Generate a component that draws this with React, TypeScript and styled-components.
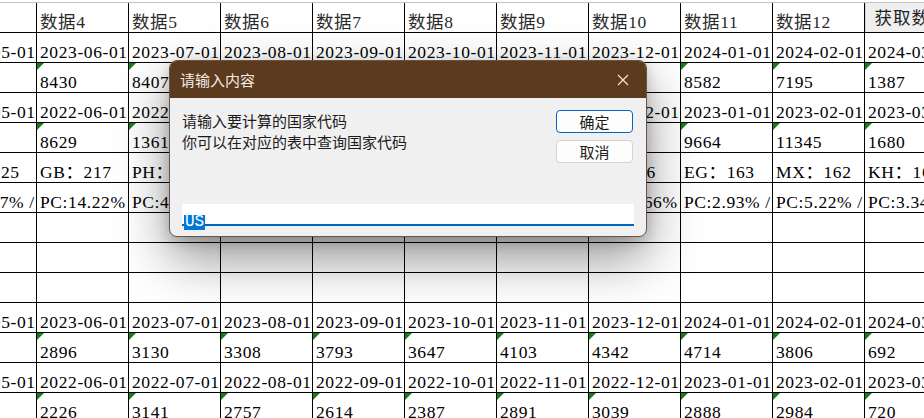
import styled, { createGlobalStyle, css } from 'styled-components';

type RowKind = 'head' | 'date' | 'num' | 'text' | 'empty';

interface SheetRow {
  kind: RowKind;
  cells: string[];
}

const months = (startYear: number, startMonth: number) =>
  Array.from({ length: 11 }, (_, i) => {
    const m = startMonth + i - 1;
    const y = startYear + Math.floor(m / 12);
    const mm = String((m % 12) + 1).padStart(2, '0');
    return `${y}-${mm}-01`;
  });

const empty = Array.from({ length: 11 }, () => '');

const rows: SheetRow[] = [
  {
    kind: 'head',
    cells: ['数据3', '数据4', '数据5', '数据6', '数据7', '数据8', '数据9', '数据10', '数据11', '数据12', '获取数据'],
  },
  { kind: 'date', cells: months(2023, 5) },
  {
    kind: 'num',
    cells: ['8211', '8430', '8407', '8135', '8322', '8590', '8741', '8466', '8582', '7195', '1387'],
  },
  { kind: 'date', cells: months(2022, 5) },
  {
    kind: 'num',
    cells: ['8012', '8629', '1361', '9120', '9388', '9547', '9702', '9815', '9664', '11345', '1680'],
  },
  {
    kind: 'text',
    cells: ['CA：225', 'GB：217', 'PH：209', 'IN：198', 'DE：185', 'TH：179', 'BR：172', 'JP：166', 'EG：163', 'MX：162', 'KH：161'],
  },
  {
    kind: 'text',
    cells: [
      'PC:9.37% / M:90.63%',
      'PC:14.22% / M:85.78%',
      'PC:4.81% / M:95.19%',
      'PC:6.12% / M:93.88%',
      'PC:8.05% / M:91.95%',
      'PC:3.91% / M:96.09%',
      'PC:7.44% / M:92.56%',
      'PC:10.66% / M:89.34%',
      'PC:2.93% / M:97.07%',
      'PC:5.22% / M:94.78%',
      'PC:3.34% / M:96.66%',
    ],
  },
  { kind: 'empty', cells: empty },
  { kind: 'empty', cells: empty },
  { kind: 'empty', cells: empty },
  { kind: 'date', cells: months(2023, 5) },
  {
    kind: 'num',
    cells: ['2714', '2896', '3130', '3308', '3793', '3647', '4103', '4342', '4714', '3806', '692'],
  },
  { kind: 'date', cells: months(2022, 5) },
  {
    kind: 'num',
    cells: ['2105', '2226', '3141', '2757', '2614', '2387', '2891', '3039', '2888', '2984', '720'],
  },
];

const App: React.FC = () => {
  return (
    <>
      <GlobalStyle />
      <Sheet>
        <Grid>
          {rows.map((row, r) =>
            row.cells.map((value, c) =>
              row.kind === 'head' && c === 10 ? (
                <ButtonCell key={`${r}-${c}`}>
                  <SheetButton type="button">{value}</SheetButton>
                </ButtonCell>
              ) : (
                <Cell key={`${r}-${c}`} $flag={row.kind === 'num'} $head={row.kind === 'head'}>
                  {value}
                </Cell>
              )
            )
          )}
        </Grid>

        {/* InputBox dialog */}
        <Dialog role="dialog">
          <TitleBar>
            <Title>请输入内容</Title>
            <CloseButton type="button" aria-label="close">
              <svg width="12" height="12" viewBox="0 0 12 12">
                <path d="M1 1 L11 11 M11 1 L1 11" stroke="#f2ebe4" strokeWidth="1.1" fill="none" />
              </svg>
            </CloseButton>
          </TitleBar>
          <Body>
            <TopRow>
              <Message>
                请输入要计算的国家代码
                <br />
                你可以在对应的表中查询国家代码
              </Message>
              <ButtonStack>
                <DialogButton type="button" $primary>
                  确定
                </DialogButton>
                <DialogButton type="button">取消</DialogButton>
              </ButtonStack>
            </TopRow>
            <InputBox>
              <Selected>US</Selected>
            </InputBox>
          </Body>
        </Dialog>
      </Sheet>
    </>
  );
};

// Styles
const GlobalStyle = createGlobalStyle`
  html, body {
    margin: 0;
    padding: 0;
    background: #fff;
  }
  body {
    width: 924px;
    height: 418px;
    overflow: hidden;
  }
`;

const Sheet = styled.div`
  position: relative;
  width: 924px;
  height: 418px;
  overflow: hidden;
  background: #fff;
`;

const Grid = styled.div`
  display: grid;
  grid-template-columns: repeat(11, 92px);
  grid-auto-rows: 30px;
  width: max-content;
  margin: 2px 0 0 -55px;
  border-top: 1px solid #c4c4c4;
  font-family: 'Liberation Serif', 'Noto Sans CJK SC', serif;
  font-size: 17.5px;
  letter-spacing: 0.6px;
  color: #000;
`;

const Cell = styled.div<{ $flag?: boolean; $head?: boolean }>`
  position: relative;
  box-sizing: border-box;
  display: flex;
  align-items: flex-end;
  padding: 0 0 0 3px;
  border-right: 1px solid #000;
  border-bottom: 1px solid #000;
  overflow: hidden;
  white-space: nowrap;
  line-height: 20px;
  color: ${(p) => (p.$head ? '#2a2a2a' : '#000')};

  ${(p) =>
    p.$flag &&
    css`
      &::before {
        content: '';
        position: absolute;
        top: 0;
        left: 0;
        border-top: 7px solid #1b7a1b;
        border-right: 7px solid transparent;
      }
    `}
`;

const ButtonCell = styled(Cell)`
  padding: 0;
  border-right: none;
`;

const SheetButton = styled.button`
  width: 100%;
  height: 100%;
  margin: 0;
  padding: 0;
  border: none;
  border-left: 1px solid #d4d4d4;
  background: #efefef;
  font: inherit;
  letter-spacing: 1px;
  color: #222;
  text-align: center;
  white-space: nowrap;
`;

const Dialog = styled.div`
  position: absolute;
  left: 169px;
  top: 60px;
  width: 478px;
  height: 177px;
  box-sizing: border-box;
  display: flex;
  flex-direction: column;
  border: 1px solid #6b5443;
  border-radius: 8px;
  overflow: hidden;
  background: #f0f0f0;
  box-shadow: 0 22px 52px rgba(0, 0, 0, 0.42), 0 4px 14px rgba(0, 0, 0, 0.2);
  font-family: 'Noto Sans CJK SC', 'Noto Sans', sans-serif;
`;

const TitleBar = styled.div`
  display: flex;
  align-items: center;
  justify-content: space-between;
  height: 37px;
  padding-left: 10px;
  background: #5b3a1e;
`;

const Title = styled.span`
  font-size: 15px;
  color: #f2ebe4;
`;

const CloseButton = styled.button`
  display: flex;
  align-items: center;
  justify-content: center;
  width: 46px;
  height: 37px;
  padding: 0;
  border: none;
  background: transparent;
`;

const Body = styled.div`
  flex: 1;
  display: flex;
  flex-direction: column;
  padding: 12px 12px 10px;
`;

const TopRow = styled.div`
  display: flex;
  justify-content: space-between;
  align-items: flex-start;
`;

const Message = styled.p`
  margin: 0;
  font-size: 15px;
  line-height: 21px;
  color: #1b1b1b;
`;

const ButtonStack = styled.div`
  display: flex;
  flex-direction: column;
  gap: 7px;
  margin-right: 1px;
`;

const DialogButton = styled.button<{ $primary?: boolean }>`
  width: 77px;
  height: 23px;
  padding: 0;
  box-sizing: border-box;
  border: 1px solid ${(p) => (p.$primary ? '#0067c0' : '#d3d3d3')};
  border-radius: 4px;
  background: #fdfdfd;
  font-family: inherit;
  font-size: 15px;
  line-height: 21px;
  color: #1b1b1b;
`;

const InputBox = styled.div`
  margin-top: auto;
  height: 22px;
  box-sizing: border-box;
  padding: 3px 2px 0;
  background: #fff;
  border-bottom: 2px solid #0067c0;
`;

const Selected = styled.span`
  display: inline-block;
  height: 15px;
  padding: 0 1px;
  background: #0078d7;
  color: #fff;
  font-family: 'Liberation Mono', monospace;
  font-size: 16px;
  line-height: 15px;
`;

export default App;
